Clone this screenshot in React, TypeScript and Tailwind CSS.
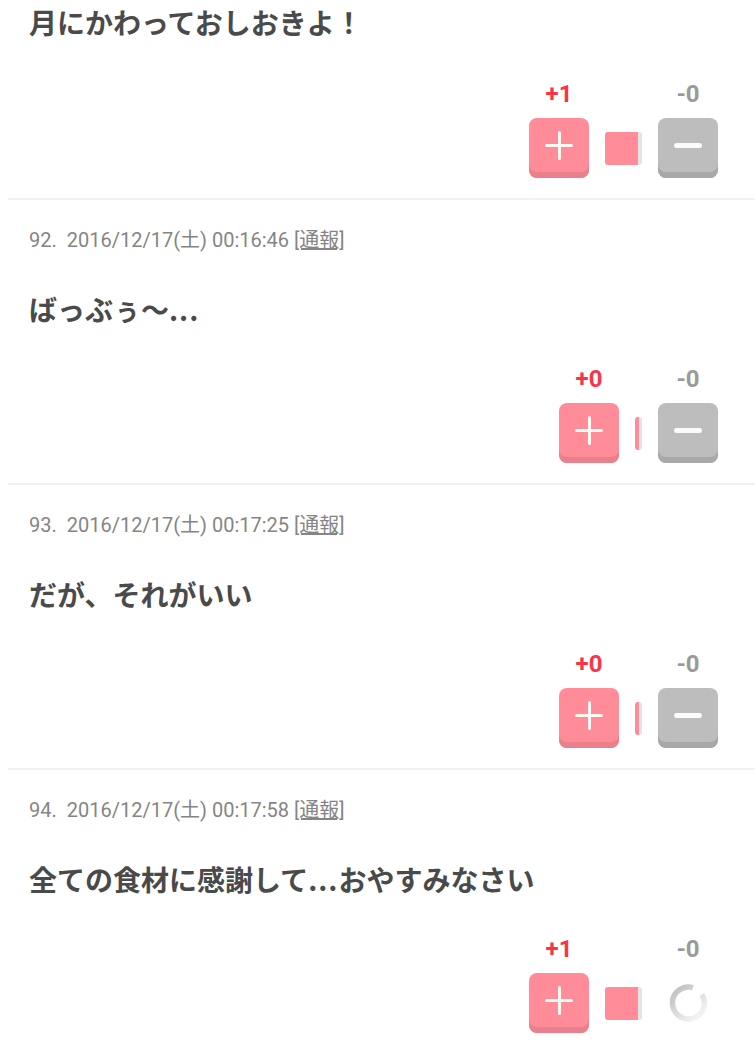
import React from "react";

type Item = {
  no?: number;
  date?: string;
  body: React.ReactNode;
  plus: string;
  minus: string;
  pink: number;
  gray: number;
  loading?: boolean;
};

const Dots = () => <span className="tracking-[1px]">...</span>;

const items: Item[] = [
  { body: "月にかわっておしおきよ！", plus: "+1", minus: "-0", pink: 33, gray: 4 },
  { no: 92, date: "2016/12/17(土) 00:16:46", body: <>ばっぶぅ〜<Dots /></>, plus: "+0", minus: "-0", pink: 4, gray: 3 },
  { no: 93, date: "2016/12/17(土) 00:17:25", body: "だが、それがいい", plus: "+0", minus: "-0", pink: 4, gray: 3 },
  { no: 94, date: "2016/12/17(土) 00:17:58", body: <>全ての食材に感謝して<Dots />おやすみなさい</>, plus: "+1", minus: "-0", pink: 33, gray: 4, loading: true },
];

const jp = { fontFamily: '"Noto Sans CJK JP", "Noto Sans", sans-serif' };
const rb = { fontFamily: 'Roboto, "Noto Sans CJK JP", sans-serif' };

function PlusButton() {
  return (
    <div className="relative h-[60px] w-[60px] rounded-[8px] bg-[#ff8c98] shadow-[inset_0_-6px_0_#e9808b]">
      <div className="absolute left-[16px] top-[26px] h-[3px] w-[28px] rounded-full bg-[#fff9f3]" />
      <div className="absolute left-[28.5px] top-[13px] h-[29px] w-[3px] rounded-full bg-[#fff9f3]" />
    </div>
  );
}

function MinusButton() {
  return (
    <div className="relative h-[60px] w-[60px] rounded-[8px] bg-[#bdbdbd] shadow-[inset_0_-6px_0_#a8a8a8]">
      <div className="absolute left-[16px] top-[25px] h-[5px] w-[28px] rounded-full bg-[#fbfbfb]" />
    </div>
  );
}

function Spinner() {
  return (
    <div className="flex h-[60px] w-[60px] items-center justify-center">
      <svg width="42" height="42" viewBox="0 0 42 42">
        <defs>
          <linearGradient id="sg" x1="0" y1="0" x2="0.6" y2="1">
            <stop offset="0" stopColor="#bdbdbd" />
            <stop offset="1" stopColor="#f2f2f2" />
          </linearGradient>
        </defs>
        <path
          d="M 28.5 6.8 A 16 16 0 1 0 36.2 15"
          fill="none"
          stroke="url(#sg)"
          strokeWidth="5.5"
          strokeLinecap="butt"
          transform="rotate(-10 21 21)"
        />
      </svg>
    </div>
  );
}

function Block({ item, first }: { item: Item; first: boolean }) {
  return (
    <div className={first ? "" : "ml-2 border-t-2 border-[#f0f0f0]"}>
      {item.no !== undefined && (
        <div className="-ml-2 pl-[29px] pt-[28px] text-[20px] leading-[24px] text-[#858585]" style={rb}>
          <span>{item.no}.</span>
          <span className="ml-[10px]">{item.date}</span>{" "}
          <span className="underline">[通報]</span>
        </div>
      )}
      <div
        className={
          (first ? "pt-[3px] pl-[29px]" : "pt-[38px] -ml-2 pl-[29px]") +
          " text-[28px] font-bold leading-[38px] text-[#4a4a4a]"
        }
        style={jp}
      >
        {item.body}
      </div>
      <div className={(first ? "pt-[38px]" : "pt-[36px]") + " flex justify-end pr-[37px] pb-[20px]"}>
        <div className="flex flex-col items-center">
          <div className="h-[30px] text-[24px] font-bold leading-[30px] text-[#fb3348]" style={rb}>
            {item.plus}
          </div>
          <div className="mt-[9px]">
            <PlusButton />
          </div>
        </div>
        <div className="mx-[16px] flex flex-col">
          <div className="h-[30px]" />
          <div className="mt-[9px] flex h-[60px] items-center">
            <div className="flex h-[33px] overflow-hidden rounded-[3px]">
              <div className="h-full bg-[#ff8c98]" style={{ width: item.pink }} />
              <div className="h-full bg-[#e4e4e4]" style={{ width: item.gray }} />
            </div>
          </div>
        </div>
        <div className="flex flex-col items-center">
          <div className="h-[30px] text-[24px] font-bold leading-[30px] text-[#9a9a9a]" style={rb}>
            {item.minus}
          </div>
          <div className="mt-[9px]">{item.loading ? <Spinner /> : <MinusButton />}</div>
        </div>
      </div>
    </div>
  );
}

export default function App() {
  return (
    <div className="h-[1047px] w-[755px] overflow-hidden bg-white">
      {items.map((it, i) => (
        <Block key={i} item={it} first={i === 0} />
      ))}
    </div>
  );
}
